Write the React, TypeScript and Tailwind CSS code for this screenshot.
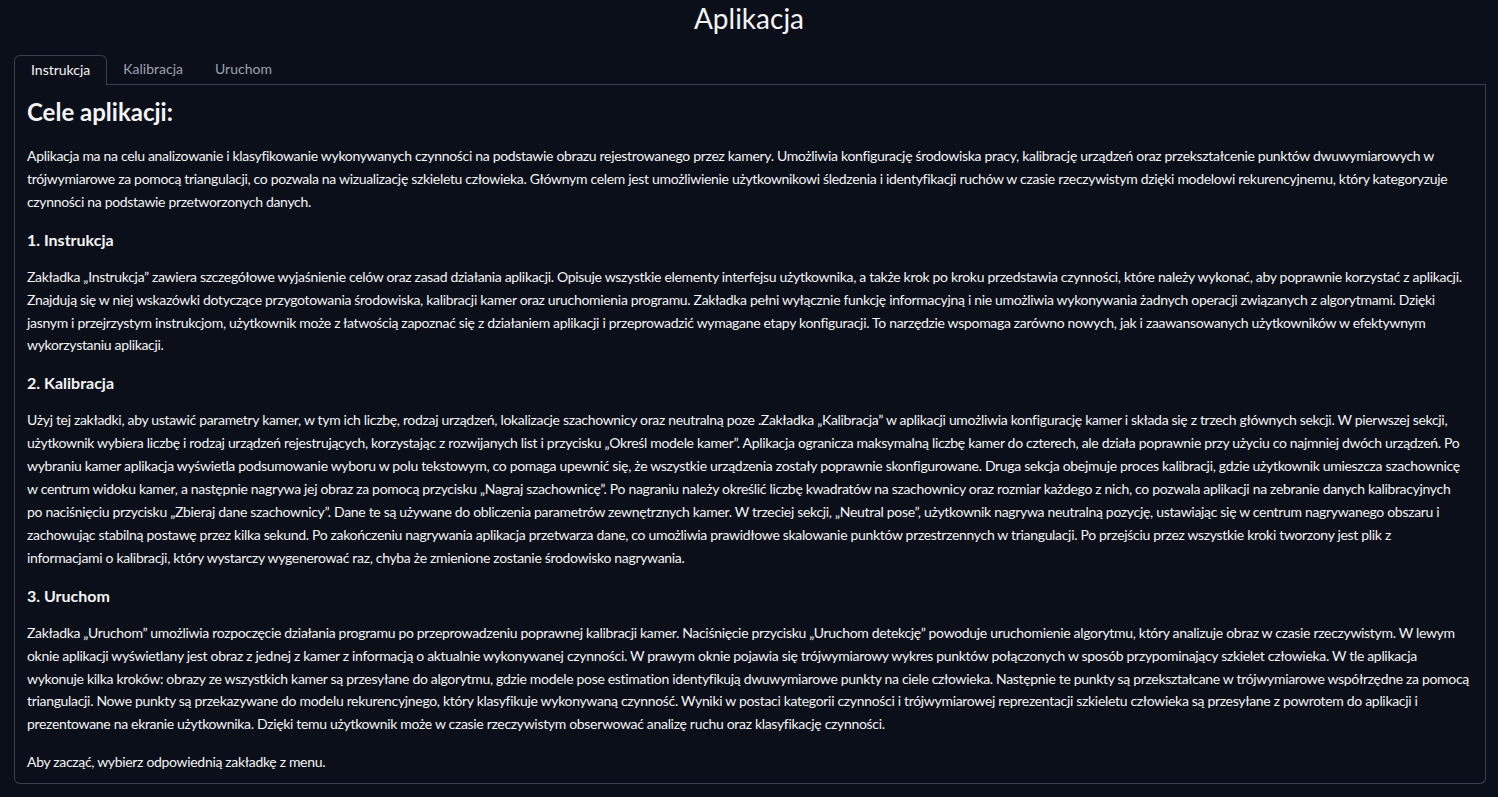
const FONT = "font-['Lato','Liberation_Sans',sans-serif]";

const tabs = ["Instrukcja", "Kalibracja", "Uruchom"];

const sections: { title?: string; lines: string[] }[] = [
  {
    lines: [
      "Aplikacja ma na celu analizowanie i klasyfikowanie wykonywanych czynności na podstawie obrazu rejestrowanego przez kamery. Umożliwia konfigurację środowiska pracy, kalibrację urządzeń oraz przekształcenie punktów dwuwymiarowych w",
      "trójwymiarowe za pomocą triangulacji, co pozwala na wizualizację szkieletu człowieka. Głównym celem jest umożliwienie użytkownikowi śledzenia i identyfikacji ruchów w czasie rzeczywistym dzięki modelowi rekurencyjnemu, który kategoryzuje",
      "czynności na podstawie przetworzonych danych.",
    ],
  },
  {
    title: "1. Instrukcja",
    lines: [
      "Zakładka „Instrukcja” zawiera szczegółowe wyjaśnienie celów oraz zasad działania aplikacji. Opisuje wszystkie elementy interfejsu użytkownika, a także krok po kroku przedstawia czynności, które należy wykonać, aby poprawnie korzystać z aplikacji.",
      "Znajdują się w niej wskazówki dotyczące przygotowania środowiska, kalibracji kamer oraz uruchomienia programu. Zakładka pełni wyłącznie funkcję informacyjną i nie umożliwia wykonywania żadnych operacji związanych z algorytmami. Dzięki",
      "jasnym i przejrzystym instrukcjom, użytkownik może z łatwością zapoznać się z działaniem aplikacji i przeprowadzić wymagane etapy konfiguracji. To narzędzie wspomaga zarówno nowych, jak i zaawansowanych użytkowników w efektywnym",
      "wykorzystaniu aplikacji.",
    ],
  },
  {
    title: "2. Kalibracja",
    lines: [
      "Użyj tej zakładki, aby ustawić parametry kamer, w tym ich liczbę, rodzaj urządzeń, lokalizacje szachownicy oraz neutralną poze .Zakładka „Kalibracja” w aplikacji umożliwia konfigurację kamer i składa się z trzech głównych sekcji. W pierwszej sekcji,",
      "użytkownik wybiera liczbę i rodzaj urządzeń rejestrujących, korzystając z rozwijanych list i przycisku „Określ modele kamer”. Aplikacja ogranicza maksymalną liczbę kamer do czterech, ale działa poprawnie przy użyciu co najmniej dwóch urządzeń. Po",
      "wybraniu kamer aplikacja wyświetla podsumowanie wyboru w polu tekstowym, co pomaga upewnić się, że wszystkie urządzenia zostały poprawnie skonfigurowane. Druga sekcja obejmuje proces kalibracji, gdzie użytkownik umieszcza szachownicę",
      "w centrum widoku kamer, a następnie nagrywa jej obraz za pomocą przycisku „Nagraj szachownicę”. Po nagraniu należy określić liczbę kwadratów na szachownicy oraz rozmiar każdego z nich, co pozwala aplikacji na zebranie danych kalibracyjnych",
      "po naciśnięciu przycisku „Zbieraj dane szachownicy”. Dane te są używane do obliczenia parametrów zewnętrznych kamer. W trzeciej sekcji, „Neutral pose”, użytkownik nagrywa neutralną pozycję, ustawiając się w centrum nagrywanego obszaru i",
      "zachowując stabilną postawę przez kilka sekund. Po zakończeniu nagrywania aplikacja przetwarza dane, co umożliwia prawidłowe skalowanie punktów przestrzennych w triangulacji. Po przejściu przez wszystkie kroki tworzony jest plik z",
      "informacjami o kalibracji, który wystarczy wygenerować raz, chyba że zmienione zostanie środowisko nagrywania.",
    ],
  },
  {
    title: "3. Uruchom",
    lines: [
      "Zakładka „Uruchom” umożliwia rozpoczęcie działania programu po przeprowadzeniu poprawnej kalibracji kamer. Naciśnięcie przycisku „Uruchom detekcję” powoduje uruchomienie algorytmu, który analizuje obraz w czasie rzeczywistym. W lewym",
      "oknie aplikacji wyświetlany jest obraz z jednej z kamer z informacją o aktualnie wykonywanej czynności. W prawym oknie pojawia się trójwymiarowy wykres punktów połączonych w sposób przypominający szkielet człowieka. W tle aplikacja",
      "wykonuje kilka kroków: obrazy ze wszystkich kamer są przesyłane do algorytmu, gdzie modele pose estimation identyfikują dwuwymiarowe punkty na ciele człowieka. Następnie te punkty są przekształcane w trójwymiarowe współrzędne za pomocą",
      "triangulacji. Nowe punkty są przekazywane do modelu rekurencyjnego, który klasyfikuje wykonywaną czynność. Wyniki w postaci kategorii czynności i trójwymiarowej reprezentacji szkieletu człowieka są przesyłane z powrotem do aplikacji i",
      "prezentowane na ekranie użytkownika. Dzięki temu użytkownik może w czasie rzeczywistym obserwować analizę ruchu oraz klasyfikację czynności.",
    ],
  },
  {
    lines: ["Aby zacząć, wybierz odpowiednią zakładkę z menu."],
  },
];

export default function App() {
  return (
    <div className={`min-h-[797px] bg-[#0b0f19] text-[#f3f4f6] ${FONT}`}>
      <h1 className="pt-[2px] text-center text-[28px] font-normal leading-[32px]">Aplikacja</h1>

      <div className="ml-[14px] mr-[12px] mt-[21px]">
        {/* Tab bar */}
        <div className="flex items-end text-[14px]">
          {tabs.map((t, i) =>
            i === 0 ? (
              <div
                key={t}
                className="h-[30px] rounded-t-md border-x border-t border-[#374151] px-4 leading-[28px] text-[#f3f4f6]"
              >
                {t}
              </div>
            ) : (
              <div key={t} className="h-[30px] border-b border-[#374151] px-4 leading-[28px] text-[#9ca3af]">
                {t}
              </div>
            )
          )}
          <div className="h-[30px] flex-1 border-b border-[#374151]" />
        </div>

        {/* Panel */}
        <div className="rounded-b-md border-x border-b border-[#374151] px-[12px] pb-[9px] pt-[11px]">
          <h2 className="text-[24px] font-bold leading-[32px]">Cele aplikacji:</h2>
          <div className="mt-[17px] flex flex-col gap-[15px]">
            {sections.map((s, i) => (
              <div key={i} className="flex flex-col gap-[15px]">
                {s.title && <h3 className="text-[16px] font-bold leading-[22px]">{s.title}</h3>}
                <p className="whitespace-nowrap text-[14px] leading-[22.9px] tracking-[-0.32px]">
                  {s.lines.map((l, j) => (
                    <span key={j} className="block">
                      {l}
                    </span>
                  ))}
                </p>
              </div>
            ))}
          </div>
        </div>
      </div>
    </div>
  );
}
